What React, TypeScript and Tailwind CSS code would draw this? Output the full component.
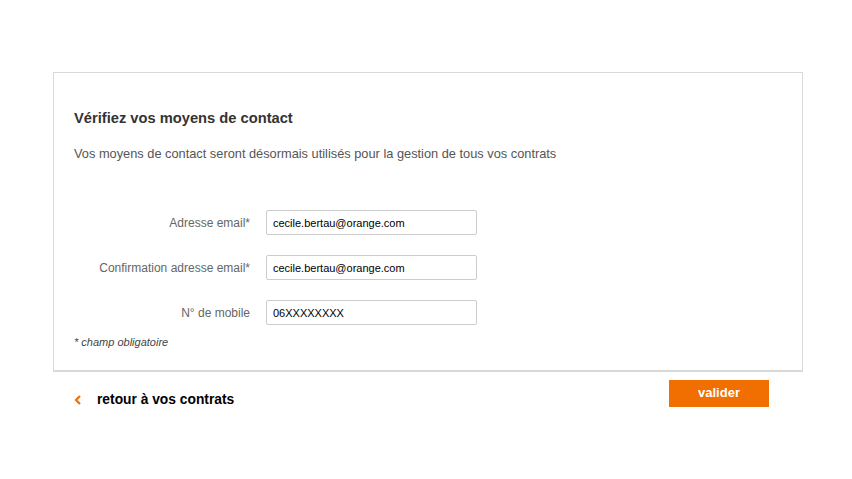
import React from 'react';

const fields = [
  { label: 'Adresse email*', value: 'cecile.bertau@orange.com' },
  { label: 'Confirmation adresse email*', value: 'cecile.bertau@orange.com' },
  { label: 'N° de mobile', value: '06XXXXXXXX' },
];

const App: React.FC = () => {
  return (
    <div className="min-h-[479px] w-[852px] bg-white pt-[72px] font-['Liberation_Sans',Arial,sans-serif]">
      <div className="mx-[53px] w-[750px]">
        {/* Card */}
        <div className="border border-b-2 border-[#d9d9d9] px-5 pt-[36px] pb-[19px]">
          <h1 className="text-[14.7px] font-bold leading-[18px] text-[#333]">Vérifiez vos moyens de contact</h1>
          <p className="mt-[19px] text-[12.8px] leading-[16px] text-[#555]">
            Vos moyens de contact seront désormais utilisés pour la gestion de tous vos contrats
          </p>

          <div className="mt-[48px] flex flex-col gap-[20px]">
            {fields.map((f) => (
              <div key={f.label} className="flex items-center">
                <label className="w-[192px] pr-[16px] text-right text-[12px] text-[#666]">{f.label}</label>
                <input
                  readOnly
                  value={f.value}
                  className="h-[25px] w-[211px] rounded-[2px] border border-[#ccc] px-[6px] text-[11px] text-black outline-none"
                />
              </div>
            ))}
          </div>

          <p className="mt-[9px] text-[11px] italic text-[#444]">* champ obligatoire</p>
        </div>

        {/* Actions */}
        <div className="flex items-start justify-between pt-[8px] pr-[34px]">
          <a href="#" className="mt-[10px] ml-[21px] flex items-center gap-[15px] text-[13.8px] font-bold text-black">
            <svg width="8" height="10" viewBox="0 0 8 10">
              <path d="M6 1 L2 5 L6 9" fill="none" stroke="#f16e00" strokeWidth="2.2" />
            </svg>
            retour à vos contrats
          </a>
          <button className="h-[27px] w-[100px] bg-[#f16e00] text-[13px] font-bold text-white">valider</button>
        </div>
      </div>
    </div>
  );
};

export default App;
